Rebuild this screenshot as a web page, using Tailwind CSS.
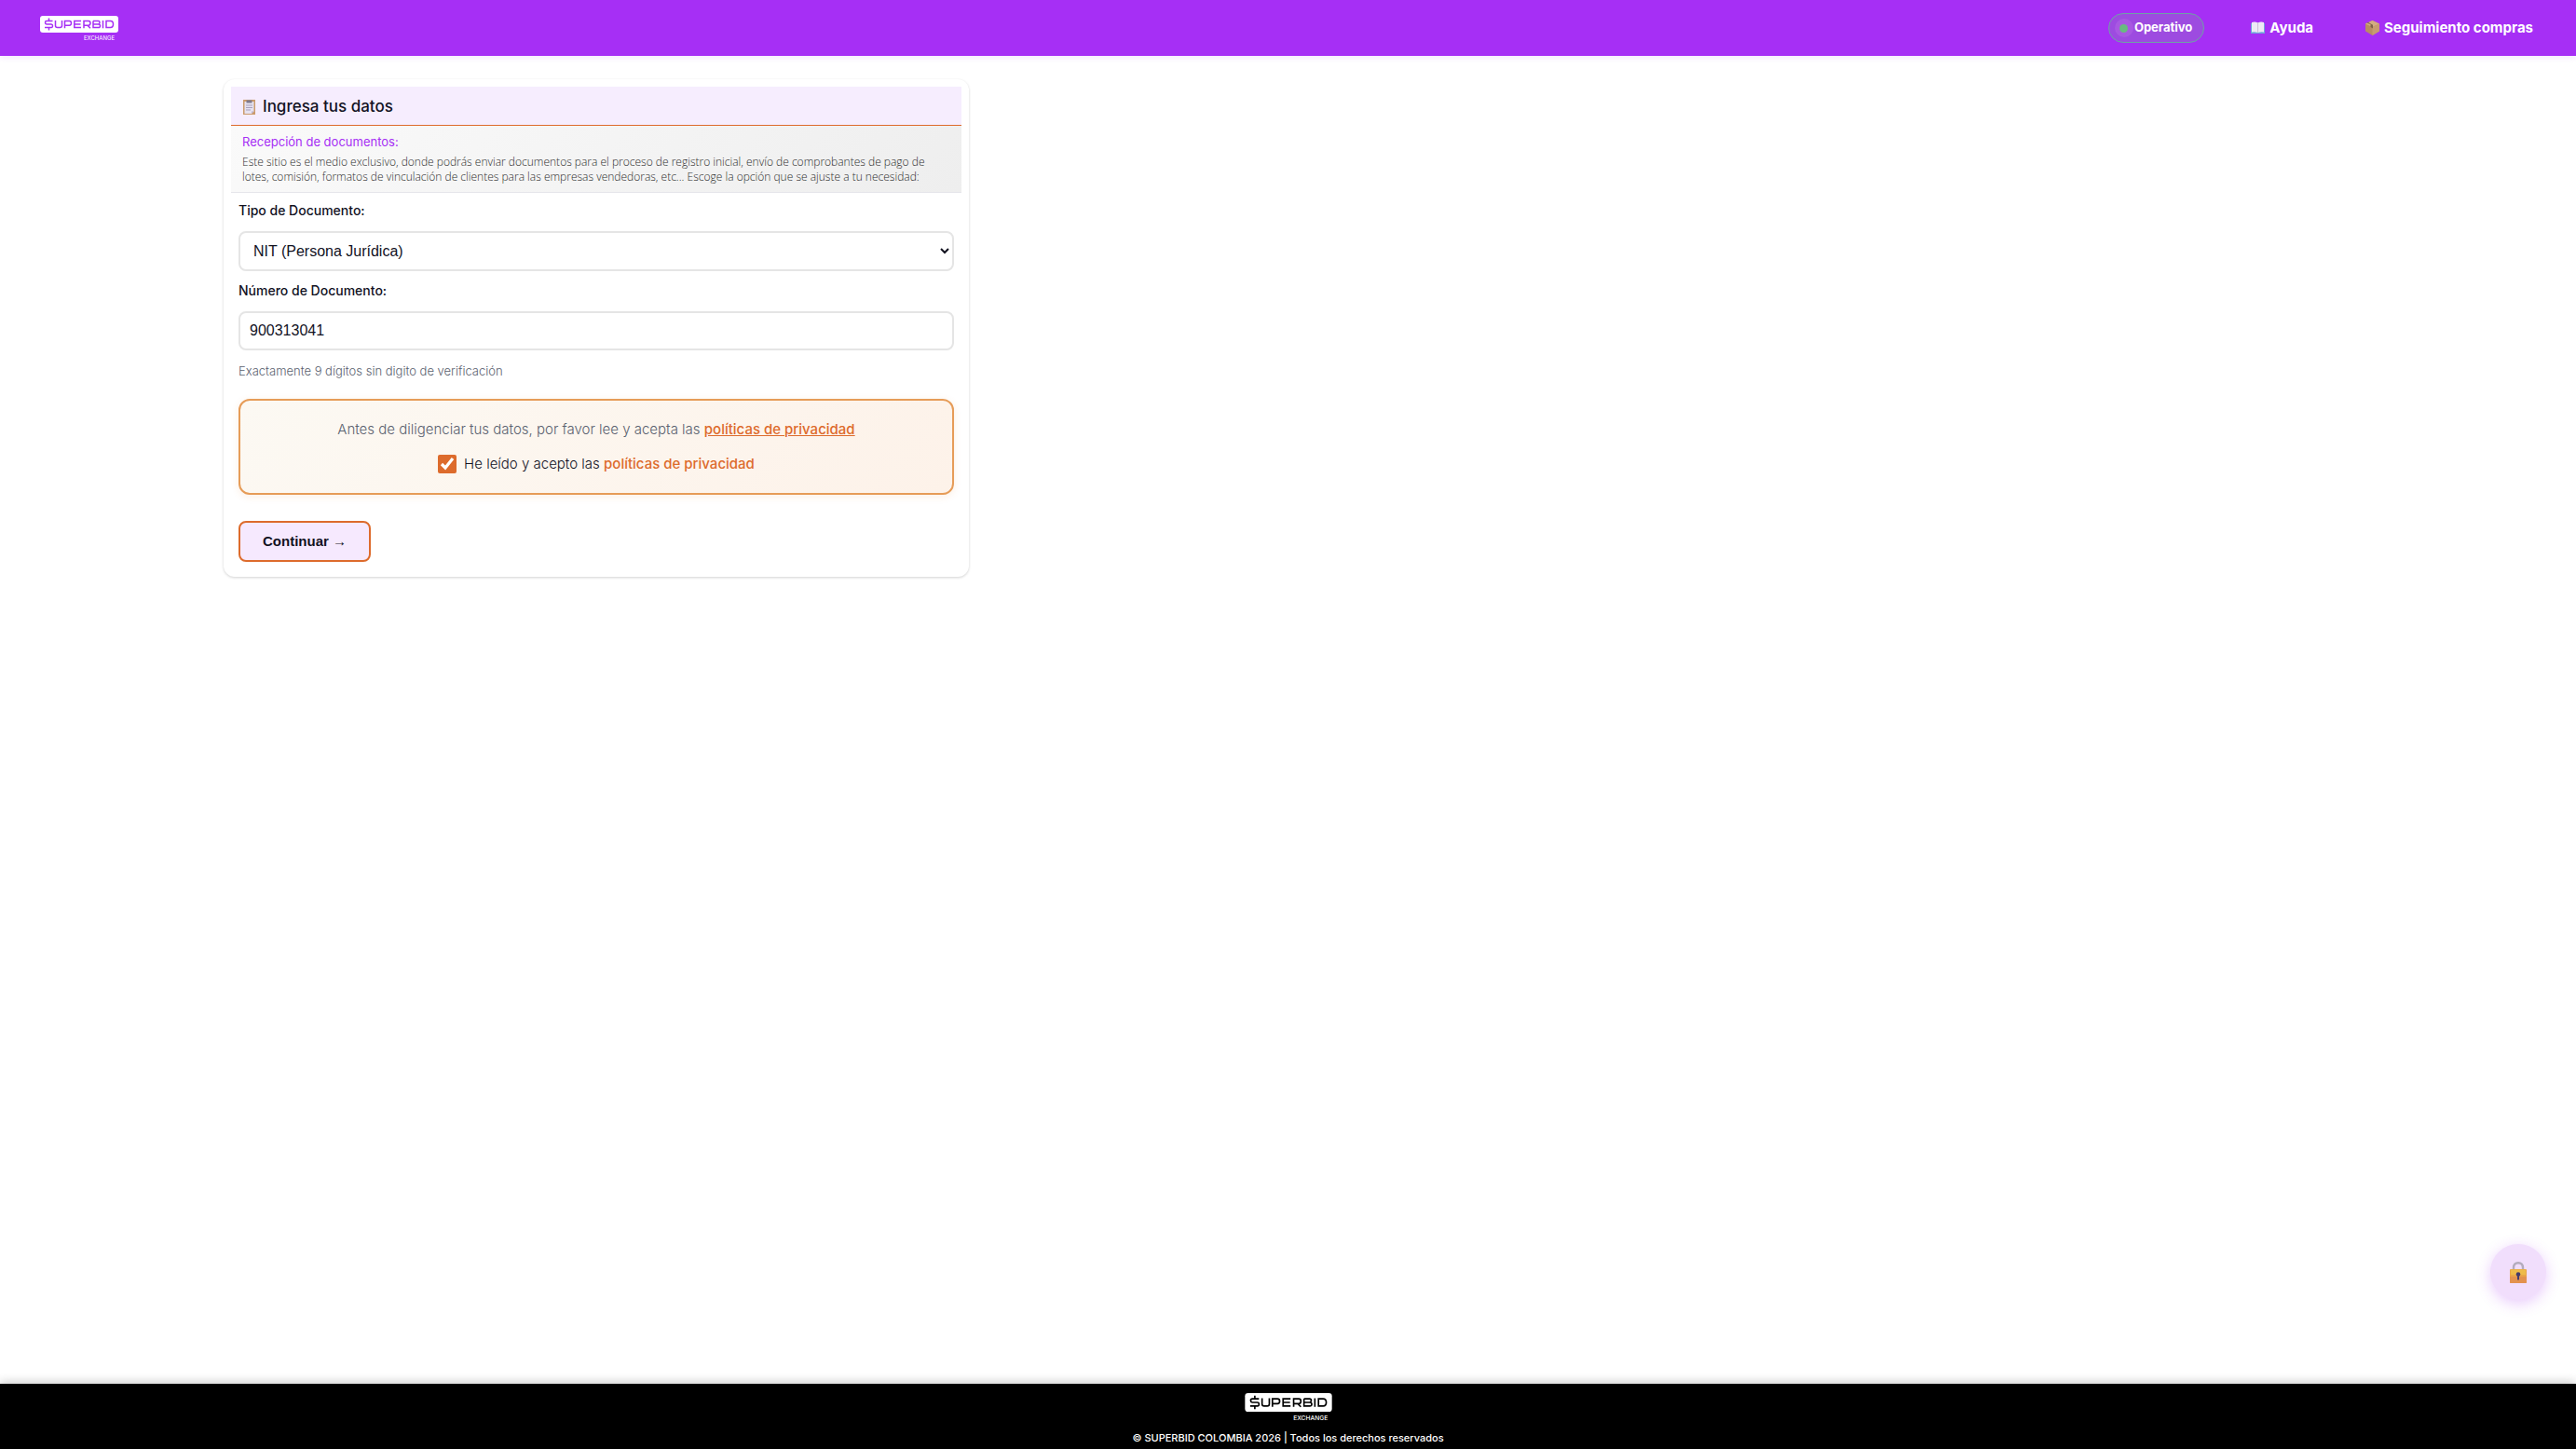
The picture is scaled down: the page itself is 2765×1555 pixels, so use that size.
<!DOCTYPE html>
<html lang="es">
<head>
    <meta charset="UTF-8">
    <meta name="viewport" content="width=device-width, initial-scale=1.0">
    <title>Superbid Colombia</title>
    <script src="https://cdn.jsdelivr.net/npm/@tailwindcss/browser@4"></script>
</head>
<body class="min-h-screen flex flex-col bg-white text-[#12121f] font-['Inter','Liberation_Sans',sans-serif]">

    <!-- Header -->
    <header class="h-[60px] bg-[#a62ff5] pl-[43px] pr-[46px] flex items-center justify-between shadow-[0_2px_6px_rgba(166,47,245,0.12)]">
        <a href="#" aria-label="Superbid Exchange">
            <svg width="84" height="27" viewBox="0 0 84 27">
                <rect width="84" height="18" rx="3" fill="#fff"/>
                <g fill="none" stroke="#a62ff5" stroke-width="1.5">
                    <path d="M13.5 5.5H7Q5.5 5.5 5.5 7.2T7 9H12Q13.5 9 13.5 10.8T12 12.5H5M9.5 2.5V5M9.5 13V15.5"/>
                    <path d="M16.5 5V10.5Q16.5 12.5 18.5 12.5H21.5Q23.5 12.5 23.5 10.5V5"/>
                    <path d="M26.5 13.3V5.5H31.5Q33.5 5.5 33.5 7.8T31.5 10.2H26.5"/>
                    <path d="M44 5.5H36.8V12.5H44M36.8 9H43.5"/>
                    <path d="M47 13.3V5.5H52Q54 5.5 54 7.8T52 10.2H47M51 10.2L54 13.3"/>
                    <path d="M57 5.5H62.5Q64 5.5 64 7.2T62.5 9H57M62.5 9Q64.5 9 64.5 10.8T62.5 12.5H57V5.5"/>
                    <path d="M67.5 5V13.3"/>
                    <path d="M71 5.5H75.5Q78.5 5.5 78.5 9T75.5 12.5H71Z"/>
                </g>
                <text x="80" y="26" text-anchor="end" font-family="Inter" font-size="6" fill="#fff">EXCHANGE</text>
            </svg>
        </a>
        <nav class="flex items-center text-white font-bold">
            <span class="flex items-center gap-[1px] h-8 pl-[6px] pr-3 rounded-full border border-[#6fa0a8] bg-[#9d4be0] text-[13px]">
                <span class="size-5 rounded-full bg-[#a858e2] flex items-center justify-center">
                    <span class="size-[9px] rounded-full bg-[#68bb80]"></span>
                </span>
                Operativo
            </span>
            <a href="#" class="ml-[50px] flex items-center gap-[5px] text-[15px]">
                <svg width="15" height="14" viewBox="0 0 15 14">
                    <path d="M0 2h15v11H0z" fill="#6fa5dc"/>
                    <path d="M1 1Q4.5 0 7.5 1.5Q10.5 0 14 1V11.5Q10.5 11 7.5 12Q4.5 11 1 11.5Z" fill="#eeeaf5"/>
                    <path d="M7.5 1.5V12" stroke="#c9c0d8" stroke-width="1"/>
                </svg>
                Ayuda
            </a>
            <a href="#" class="ml-[56px] flex items-center gap-[5px] text-[15px]">
                <svg width="15" height="16" viewBox="0 0 15 16">
                    <path d="M7.5 0L15 3.5V11.5L7.5 16L0 11.5V3.5Z" fill="#b98d63"/>
                    <path d="M7.5 0L15 3.5L7.5 7L0 3.5Z" fill="#d3ac80"/>
                    <path d="M7.5 7L15 3.5V11.5L7.5 16Z" fill="#c79c70"/>
                    <path d="M3 2L8 4.8V8.5L5.5 7V4L1.5 2.8Z" fill="#7d6248"/>
                </svg>
                Seguimiento compras
            </a>
        </nav>
    </header>

    <!-- Form card -->
    <main class="flex-1 px-60 pt-[25px]">
        <form class="max-w-[800px] p-2 pb-4 rounded-xl bg-white shadow-[0_1px_3px_rgba(0,0,0,0.18)]">
            <h1 class="h-[42px] px-[13px] pt-[2px] flex items-center gap-2 bg-[#f6edfe] border-b border-[#dd6b2c] text-[17px] font-medium">
                <svg width="13" height="16" viewBox="0 0 13 16">
                    <rect width="13" height="16" fill="#cb9b6c"/>
                    <path d="M1.5 2H11.5V12.5L9 15H1.5Z" fill="#e6e2f0"/>
                    <path d="M3.5 0.5H9.5V3.5H3.5Z" fill="#7f7a8e"/>
                    <path d="M3 6H10M3 8.5H10M3 11H8" stroke="#a8a0bd" stroke-width="1"/>
                    <path d="M9 15V12.5H11.5Z" fill="#b7b0cc"/>
                </svg>
                Ingresa tus datos
            </h1>
            <div class="min-h-[72px] px-3 pt-2 bg-linear-135 from-[#fafafa] to-[#eeeeee] border-b border-[#e5e5ea]">
                <h2 class="text-[13px] leading-[18px] text-[#a62ff5]">Recepción de documentos:</h2>
                <p class="mt-[5px] text-[12px] leading-4 font-light text-[#2e2e2e] font-['Open_Sans',sans-serif]">Este sitio es el medio exclusivo, donde podrás enviar documentos para el proceso de registro inicial, envío de comprobantes de pago de<br>lotes, comisión, formatos de vinculación de clientes para las empresas vendedoras, etc... Escoge la opción que se ajuste a tu necesidad:</p>
            </div>

            <div class="px-2 pt-[9px]">
                <label for="docType" class="block text-[14px] leading-5 font-medium">Tipo de Documento:</label>
                <select id="docType" class="mt-3 block w-full h-[43px] px-[10px] rounded-lg border-2 border-[#e5e5e5] bg-white text-[16px] font-['Liberation_Sans',Arial,sans-serif]">
                    <option>NIT (Persona Jurídica)</option>
                    <option>Cédula de Ciudadanía</option>
                </select>

                <label for="docNumber" class="mt-[11px] block text-[14px] leading-5 font-medium">Número de Documento:</label>
                <input id="docNumber" type="text" value="900313041" class="mt-3 block w-full h-[42px] px-[10px] rounded-lg border-2 border-[#e5e5e5] bg-white text-[16px] font-['Liberation_Sans',Arial,sans-serif]">
                <p class="mt-3 text-[13px] leading-5 font-light text-[#5b6270]">Exactamente 9 dígitos sin digito de verificación</p>

                <!-- Privacy consent -->
                <div class="mt-5 h-[103px] pt-[21px] flex flex-col items-center gap-[17px] rounded-xl border-2 border-[#e69c58] bg-linear-135 from-[#fcf9f3] to-[#fdf2e9] text-[15px] leading-5 shadow-[0_2px_8px_rgba(230,126,34,0.12)]">
                    <p class="font-light text-[#5b6270]">Antes de diligenciar tus datos, por favor lee y acepta las <a href="#" class="font-medium text-[#dd6b2c] underline">políticas de privacidad</a></p>
                    <div class="flex items-center gap-2">
                        <input id="privacy" type="checkbox" checked class="size-5 accent-[#dd6b2c]">
                        <label for="privacy" class="font-light">He leído y acepto las <a href="#" class="font-medium text-[#dd6b2c]">políticas de privacidad</a></label>
                    </div>
                </div>

                <button type="button" class="mt-7 h-11 px-6 rounded-lg border-2 border-[#dd6b2c] bg-[#f6e9fe] text-[15px] font-bold font-['Liberation_Sans',Arial,sans-serif]">Continuar <span class="font-normal">→</span></button>
            </div>
        </form>
    </main>

    <!-- Footer -->
    <footer class="h-[70px] pt-[10px] flex flex-col items-center bg-black text-white shadow-[0_-2px_10px_rgba(0,0,0,0.2)]">
        <svg width="94" height="30" viewBox="0 0 84 27">
            <rect width="84" height="18" rx="3" fill="#fff"/>
            <g fill="none" stroke="#000" stroke-width="1.5">
                <path d="M13.5 5.5H7Q5.5 5.5 5.5 7.2T7 9H12Q13.5 9 13.5 10.8T12 12.5H5M9.5 2.5V5M9.5 13V15.5"/>
                <path d="M16.5 5V10.5Q16.5 12.5 18.5 12.5H21.5Q23.5 12.5 23.5 10.5V5"/>
                <path d="M26.5 13.3V5.5H31.5Q33.5 5.5 33.5 7.8T31.5 10.2H26.5"/>
                <path d="M44 5.5H36.8V12.5H44M36.8 9H43.5"/>
                <path d="M47 13.3V5.5H52Q54 5.5 54 7.8T52 10.2H47M51 10.2L54 13.3"/>
                <path d="M57 5.5H62.5Q64 5.5 64 7.2T62.5 9H57M62.5 9Q64.5 9 64.5 10.8T62.5 12.5H57V5.5"/>
                <path d="M67.5 5V13.3"/>
                <path d="M71 5.5H75.5Q78.5 5.5 78.5 9T75.5 12.5H71Z"/>
            </g>
            <text x="80" y="26" text-anchor="end" font-family="Inter" font-size="6" font-weight="500" fill="#fff">EXCHANGE</text>
        </svg>
        <p class="mt-2 text-[11px] leading-5 font-medium">© SUPERBID COLOMBIA 2026 | Todos los derechos reservados</p>
    </footer>

    <!-- Floating lock button -->
    <button type="button" aria-label="Acceso privado" class="fixed right-[32px] bottom-[160px] size-[60px] rounded-full bg-[#f1defc] flex items-center justify-center shadow-[0_4px_15px_rgba(166,47,245,0.25)]">
        <svg width="18" height="23" viewBox="0 0 18 23">
            <path d="M4 9V6.5Q4 1.3 9 1.3T14 6.5V9" fill="none" stroke="#b4acbd" stroke-width="2.4"/>
            <rect x="0" y="8" width="18" height="15" rx="1" fill="#e9a547"/>
            <path d="M0 16H18V22Q18 23 17 23H1Q0 23 0 22Z" fill="#e3924e"/>
            <path d="M1 8.5H17V14H1Z" fill="#eebb4a"/>
            <circle cx="9" cy="13.5" r="2.3" fill="#433b6b"/>
            <path d="M8 14H10V19.5H8Z" fill="#433b6b"/>
        </svg>
    </button>

</body>
</html>
